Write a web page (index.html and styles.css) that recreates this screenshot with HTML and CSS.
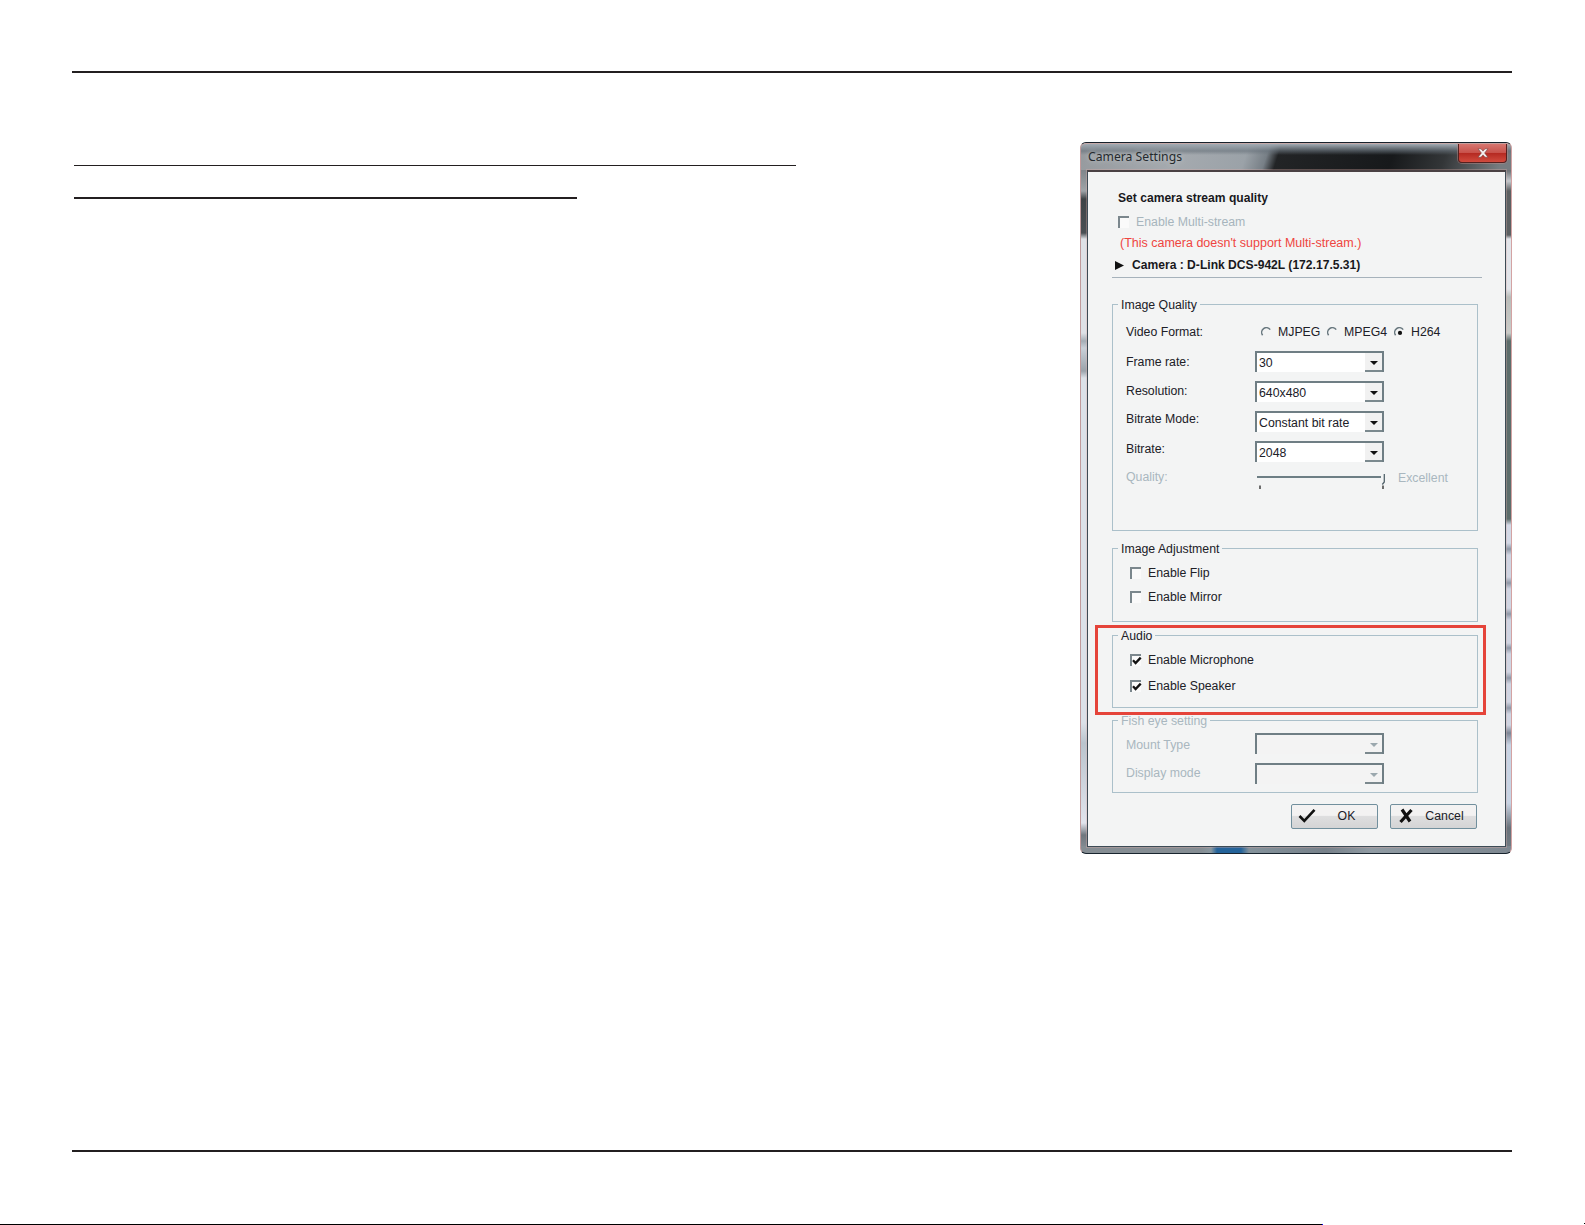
FILE: index.html
```html
<!DOCTYPE html>
<html lang="en">
<head>
<meta charset="utf-8">
<title>Camera Settings</title>
<link rel="stylesheet" href="styles.css">
</head>
<body>
<main class="page">
  <hr class="rule">
  <div class="content">
    <div class="headings">
      <div class="underline first"></div>
      <div class="underline second"></div>
    </div>
    <section class="dialog">
      <header class="titlebar">
        <span class="title">Camera Settings</span>
        <button class="close" aria-label="Close"><svg width="12" height="10" viewBox="0 0 12 10"><path d="M1 .8h3l2 2.3L8 .8h3L7.6 5 11 9.2H8L6 6.9 4 9.2H1L4.4 5z" fill="#f4eeee" stroke="#773d3d" stroke-width=".6"/></svg></button>
      </header>
      <div class="client">
        <div class="intro">
          <h1 class="heading">Set camera stream quality</h1>
          <label class="multi"><i class="box"></i><span>Enable Multi-stream</span></label>
          <p class="warning">(This camera doesn't support Multi-stream.)</p>
          <p class="camera"><svg width="9" height="9" viewBox="0 0 9 9"><path d="M0 0L9 4.5 0 9z" fill="#111"/></svg><span>Camera : D-Link DCS-942L (172.17.5.31)</span></p>
        </div>
        <section class="group quality">
          <h2 class="legend">Image Quality</h2>
          <div class="form">
            <div class="labels">
              <span class="l-format">Video Format:</span>
              <span class="l-rate">Frame rate:</span>
              <span class="l-res">Resolution:</span>
              <span class="l-mode">Bitrate Mode:</span>
              <span class="l-bit">Bitrate:</span>
              <span class="l-quality dim">Quality:</span>
            </div>
            <div class="controls">
              <div class="radios">
                <label class="radio r1"><svg width="11" height="11" viewBox="0 0 11 11"><path d="M1.6 8.2A4.7 4.7 0 0 1 9.2 2.6" class="arc"/></svg>MJPEG</label>
                <label class="radio r2"><svg width="11" height="11" viewBox="0 0 11 11"><path d="M1.6 8.2A4.7 4.7 0 0 1 9.2 2.6" class="arc"/></svg>MPEG4</label>
                <label class="radio"><svg width="11" height="11" viewBox="0 0 11 11"><path d="M1.6 8.2A4.7 4.7 0 0 1 9.2 2.6" class="arc"/><circle cx="6" cy="5.9" r="2.1" fill="#111"/></svg>H264</label>
              </div>
              <div class="combo"><span>30</span><i class="drop"></i></div>
              <div class="combo"><span>640x480</span><i class="drop"></i></div>
              <div class="combo"><span>Constant bit rate</span><i class="drop"></i></div>
              <div class="combo"><span>2048</span><i class="drop"></i></div>
              <div class="slider">
                <svg width="130" height="18" viewBox="0 0 130 18"><path d="M2 4h124" stroke="#6d7e84" stroke-width="2"/><path d="M129.3 1v8l-2 2.5" fill="none" stroke="#52636b" stroke-width="1.3"/><path d="M5 12.5v3.5M128 12.5v3.5" stroke="#333" stroke-width="1.4"/></svg>
                <span class="dim">Excellent</span>
              </div>
            </div>
          </div>
        </section>
        <section class="group adjust">
          <h2 class="legend">Image Adjustment</h2>
          <label class="check"><i class="box"></i>Enable Flip</label>
          <label class="check"><i class="box"></i>Enable Mirror</label>
        </section>
        <div class="highlight">
          <section class="group audio">
            <h2 class="legend">Audio</h2>
            <label class="check"><i class="box"><svg width="10" height="10" viewBox="0 0 10 10"><path d="M1 4.2l2.6 2.8L8.7 1.6" class="tick"/></svg></i>Enable Microphone</label>
            <label class="check"><i class="box"><svg width="10" height="10" viewBox="0 0 10 10"><path d="M1 4.2l2.6 2.8L8.7 1.6" class="tick"/></svg></i>Enable Speaker</label>
          </section>
        </div>
        <section class="group fisheye dim">
          <h2 class="legend">Fish eye setting</h2>
          <div class="form">
            <div class="labels">
              <span class="l-mount">Mount Type</span>
              <span class="l-display">Display mode</span>
            </div>
            <div class="controls">
              <div class="combo off"><span></span><i class="drop"></i></div>
              <div class="combo off"><span></span><i class="drop"></i></div>
            </div>
          </div>
        </section>
        <footer class="actions">
          <button class="btn"><svg width="18" height="16" viewBox="0 0 18 16"><path d="M1.5 8l4.8 4.8L16.5 1.8" fill="none" stroke="#111" stroke-width="2.6"/></svg><span>OK</span></button>
          <button class="btn cancel"><svg width="14" height="16" viewBox="0 0 14 16"><path d="M3 1.5l8 12M12.5 2L1.5 14" fill="none" stroke="#111" stroke-width="3.2"/></svg><span>Cancel</span></button>
        </footer>
      </div>
    </section>
  </div>
  <hr class="rule">
  <div class="edge"><i class="edge-line"></i><i class="edge-dot"></i></div>
</main>
</body>
</html>
```
FILE: styles.css
```css
* { box-sizing: border-box; }
body { margin: 0; background: #fff; overflow: hidden; }
h1, h2, p { margin: 0; font-weight: normal; font-size: inherit; }
.page {
  display: flex; flex-direction: column;
  width: 1585px; height: 1225px; padding-top: 71px;
  font: 12.3px/14px "Liberation Sans", Arial, sans-serif; color: #202027;
}
.rule { width: 1440px; height: 2px; margin: 0 0 0 72px; border: 0; background: #231f20; flex: none; }
.content { display: flex; justify-content: space-between; height: 1077px; padding: 69px 73px 0 74px; }
.headings { padding-top: 23px; }
.underline { background: #231f20; }
.first { width: 722px; height: 1px; }
.second { width: 503px; height: 2px; margin-top: 31px; }
.edge { display: flex; justify-content: space-between; align-items: flex-end; margin-top: auto; height: 2px; }
.edge-line { width: 1323px; height: 1px; background: #000; border-right: 1px solid #00f; }
.edge-dot { width: 1px; height: 1px; align-self: flex-start; background: #000; }

.dialog {
  width: 432px; height: 712px; padding: 0 5px 6px 6px; border: 1px solid #23343e; border-color: #17222c #d3a3a3 #18242e #c09a9b;
  border-radius: 6px;
  background:
    linear-gradient(90deg, #858d93 0 120px, #89979f 130px, #24639a 136px 160px, #84929b 168px, #77818a 245px, #909ba3 290px, #7d8790 100%) 0 100% / 100% 7px no-repeat,
    linear-gradient(180deg, #80868b 28px, #9fa4a8 48px, #3e4346 56px, #4a4f53 90px, #dee1e6 96px 190px, #a5adb5 198px, #c9d0d8 205px, #9ba3ab 228px, #dbe1e8 235px 580px, #bac4cd 600px, #e1e4ed 680px, #70777e 692px, #8c949b 100%) 0 0 / 7px 100% no-repeat,
    linear-gradient(180deg, #6f7478 28px, #c5c9cd 38px, #5c6062 48px 92px, #e2e5ea 96px 146px, #b9bdba 154px, #c9cbc8 190px, #5d6d6b 198px 376px, #d3d9e6 382px 400px, #8e98a6 406px, #d0d5e2 412px 434px, #8f98a7 440px, #d0d5e2 446px 465px, #8f98a7 471px, #d0d5e2 477px 500px, #8f98a7 505px, #d0d5e2 511px 529px, #8f98a7 535px, #d0d5e2 541px 559px, #8f98a7 565px, #d0d5e2 571px 582px, #7d8695 590px, #c8d4e4 602px 660px, #69727a 685px, #737c84 100%) 100% 0 / 6px 100% no-repeat,
    #858e95;
}
.titlebar {
  display: flex; justify-content: space-between; height: 27px; margin: 0 -5px 0 -6px; padding: 0 4px 0 7px;
  border-top: 1px solid #c6aaa9; border-radius: 5px 5px 0 0;
  background:
    linear-gradient(180deg, #a2abb3, #67717a99 7px, transparent 11px),
    linear-gradient(108deg, #969a9e 0, #a5aaaf 95px, #9ba2a8 160px, #777f86 180px, #222426 191px, #17191b 300px, #333638 350px, #777c80 405px, #777c80 100%);
}
.title { font: 12.2px/26px "Noto Sans", sans-serif; color: #252a2e; white-space: nowrap; text-shadow: 0 0 5px #c9cdd0; }
.close {
  width: 49px; height: 19px; display: flex; justify-content: center; align-items: center; padding: 0 0 1px;
  border: 1px solid #55201f; border-top: 0; border-radius: 0 0 4px 4px;
  background: linear-gradient(#d77670 0, #c8524b 48%, #b52a22 52%, #d14b3e); box-shadow: 0 0 0 1px #c9928d66;
}
.client {
  height: 677px; background: #f3f4f4; border: 1px solid #3c4b55; outline: 1px solid #e2afa755;
  border-top: 2px solid #4a4143; padding: 0 0 0 24px;
}
.intro { width: 370px; height: 106px; border-bottom: 1px solid #a6b2bb; padding-top: 19px; white-space: nowrap; }
.heading { font-weight: bold; font-size: 12.1px; padding-left: 6px; color: #18181c; }
.multi { display: flex; gap: 7px; padding-left: 6px; margin-top: 10px; color: #a7b5bd; }
.warning { margin: 7px 0 0 8px; color: #ef4540; font-size: 12.5px; }
.camera { display: flex; align-items: center; gap: 8px; margin: 8px 0 0 3px; font-weight: bold; font-size: 12.1px; color: #18181c; }

.box { display: block; flex: none; width: 11px; height: 12px; border: solid #7b878d; border-width: 2px 0 0 2px; background: #fafafa; margin-top: 1px; }
.box svg { display: block; }
.tick { fill: none; stroke: #111; stroke-width: 2.3; }
.arc { fill: none; stroke: #68777e; stroke-width: 1.5; }
.dim { color: #a9b7bf; }

.group { width: 366px; border: 1px solid #abc0ca; }
.legend { width: fit-content; height: 14px; margin: -7px 0 0 5px; padding: 0 3px; background: #f3f4f4; white-space: nowrap; }
.quality { height: 227px; margin-top: 26px; }
.adjust { height: 74px; margin-top: 17px; }
.form { display: flex; white-space: nowrap; }
.labels { width: 142px; padding-left: 13px; display: flex; flex-direction: column; }
.l-format { margin-top: 13px; }
.l-rate { margin-top: 16px; }
.l-res { margin-top: 15px; }
.l-mode { margin-top: 14px; }
.l-bit { margin-top: 16px; }
.l-quality { margin-top: 14px; }
.controls { display: flex; flex-direction: column; gap: 9px; }
.radios { display: flex; height: 14px; margin: 13px 0 3px 6px; }
.radio { display: flex; gap: 6px; align-items: center; }
.r1 { width: 66px; }
.r2 { width: 67px; }
.combo {
  display: flex; justify-content: space-between; width: 129px; height: 21px;
  border: solid #6f7e84; border-width: 2px 2px 0 2px; background: #fff; padding-left: 2px; line-height: 20px;
}
.drop { position: relative; width: 17px; background: #f1f1f1; border-bottom: 2px solid #7b898e; }
.drop::after { content: ""; position: absolute; left: 5px; top: 8px; border: 4px solid transparent; border-top: 4px solid #111; border-bottom: 0; }
.off, .off .drop { background: #f3f3f3; }
.off .drop::after { border-top-color: #9ba8ae; }
.slider { display: flex; gap: 13px; height: 18px; margin-top: 2px; }
.slider span { margin-top: -2px; }

.check { display: flex; gap: 7px; padding-left: 17px; margin-top: 10px; white-space: nowrap; }
.check + .check { margin-top: 10px; }
.highlight { position: relative; z-index: 1; width: 391px; height: 90px; margin: 3px 0 0 -17px; border: 3px solid #e5443a; padding: 7px 0 0 14px; }
.audio { height: 73px; }
.audio .check + .check { margin-top: 12px; }
.fisheye { height: 73px; margin-top: 5px; }
.fisheye .controls { padding-top: 5px; }
.l-mount { margin-top: 10px; }
.l-display { margin-top: 14px; }
.actions { display: flex; gap: 12px; padding: 11px 0 0 179px; }
.btn {
  display: flex; align-items: center; width: 87px; height: 25px; padding: 0 0 1px 6px; border: 1px solid #718f9d; border-radius: 2px;
  background: linear-gradient(#f3f2f2 0 45%, #dededf 50%, #d4d4d5); font: inherit; color: #202027;
}
.btn span { flex: 1; }
.cancel { padding-left: 8px; }
```
